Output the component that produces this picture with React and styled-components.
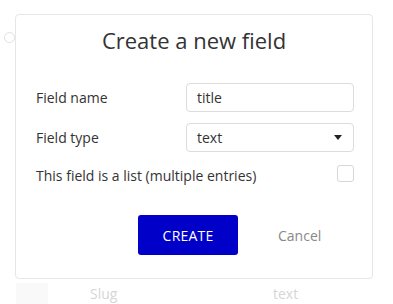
import React from 'react';
import styled, { createGlobalStyle } from 'styled-components';

const GlobalStyle = createGlobalStyle`
  html, body {
    margin: 0;
    padding: 0;
    background: #fff;
  }
  body {
    font-family: "Open Sans", "Liberation Sans", sans-serif;
    color: #333;
  }
`;

const Page = styled.div`
  position: relative;
  width: 393px;
  height: 304px;
  overflow: hidden;
  background: #fff;
`;

// faded page content behind the dialog
const Backdrop = styled.div`
  display: flex;
  flex-direction: column;
  height: 100%;
  opacity: 0.35;
`;

const TopRow = styled.div`
  display: flex;
  padding: 32px 0 0 4px;
`;

const Radio = styled.span`
  width: 9px;
  height: 9px;
  border: 1px solid #aaa;
  border-radius: 50%;
`;

const TableRow = styled.div`
  margin-top: auto;
  display: grid;
  grid-template-columns: 90px 183px 1fr;
  align-items: center;
  height: 26px;
  font-size: 14px;
  line-height: 18px;
  color: #888;
  transform: translateY(3px);
`;

const Handle = styled.span`
  width: 32px;
  height: 22px;
  margin-left: 16px;
  background: #eee;
`;

const Dialog = styled.div`
  position: absolute;
  left: 15px;
  top: 14px;
  width: 358px;
  box-sizing: border-box;
  padding: 10px 20px 23px;
  background: #fff;
  border: 1px solid #e6e6e6;
  border-radius: 4px;
`;

const Title = styled.h2`
  margin: 0 0 28px;
  font-size: 22px;
  line-height: 30px;
  font-weight: 400;
  text-align: center;
  color: #333;
`;

const FormGrid = styled.div`
  display: grid;
  grid-template-columns: 150px 168px;
  row-gap: 11px;
  align-items: center;
`;

const Label = styled.label`
  font-size: 14px;
  color: #333;
`;

const Field = styled.div`
  height: 29px;
  box-sizing: border-box;
  display: flex;
  align-items: center;
  padding: 0 10px;
  border: 1px solid #dcdcdc;
  border-radius: 4px;
  font-size: 14px;
  color: #333;
`;

const Caret = styled.span`
  margin-left: auto;
  margin-right: 1px;
  width: 0;
  height: 0;
  border-left: 4px solid transparent;
  border-right: 4px solid transparent;
  border-top: 5px solid #222;
`;

const CheckRow = styled.div`
  grid-column: 1 / -1;
  display: flex;
  align-items: center;
  justify-content: space-between;
  margin-top: 3px;
`;

const Checkbox = styled.span`
  width: 17px;
  height: 17px;
  box-sizing: border-box;
  border: 1px solid #d6d6d6;
  border-radius: 3px;
  transform: translateY(-2px);
`;

const Actions = styled.div`
  display: flex;
  align-items: center;
  gap: 40px;
  margin: 30px 0 0 102px;
`;

const PrimaryButton = styled.button`
  width: 100px;
  height: 40px;
  border: none;
  border-radius: 3px;
  background: #0000c9;
  color: #fff;
  font-family: inherit;
  font-size: 14px;
  letter-spacing: 0.2px;
`;

const LinkButton = styled.button`
  border: none;
  background: none;
  padding: 0;
  color: #888;
  font-family: inherit;
  font-size: 14px;
`;

export default function App() {
  return (
    <Page>
      <GlobalStyle />
      <Backdrop>
        <TopRow>
          <Radio />
        </TopRow>
        <TableRow>
          <Handle />
          <span>Slug</span>
          <span>text</span>
        </TableRow>
      </Backdrop>
      <Dialog>
        <Title>Create a new field</Title>
        <FormGrid>
          <Label>Field name</Label>
          <Field>title</Field>
          <Label>Field type</Label>
          <Field>
            text
            <Caret />
          </Field>
          <CheckRow>
            <Label>This field is a list (multiple entries)</Label>
            <Checkbox />
          </CheckRow>
        </FormGrid>
        <Actions>
          <PrimaryButton>CREATE</PrimaryButton>
          <LinkButton>Cancel</LinkButton>
        </Actions>
      </Dialog>
    </Page>
  );
}
